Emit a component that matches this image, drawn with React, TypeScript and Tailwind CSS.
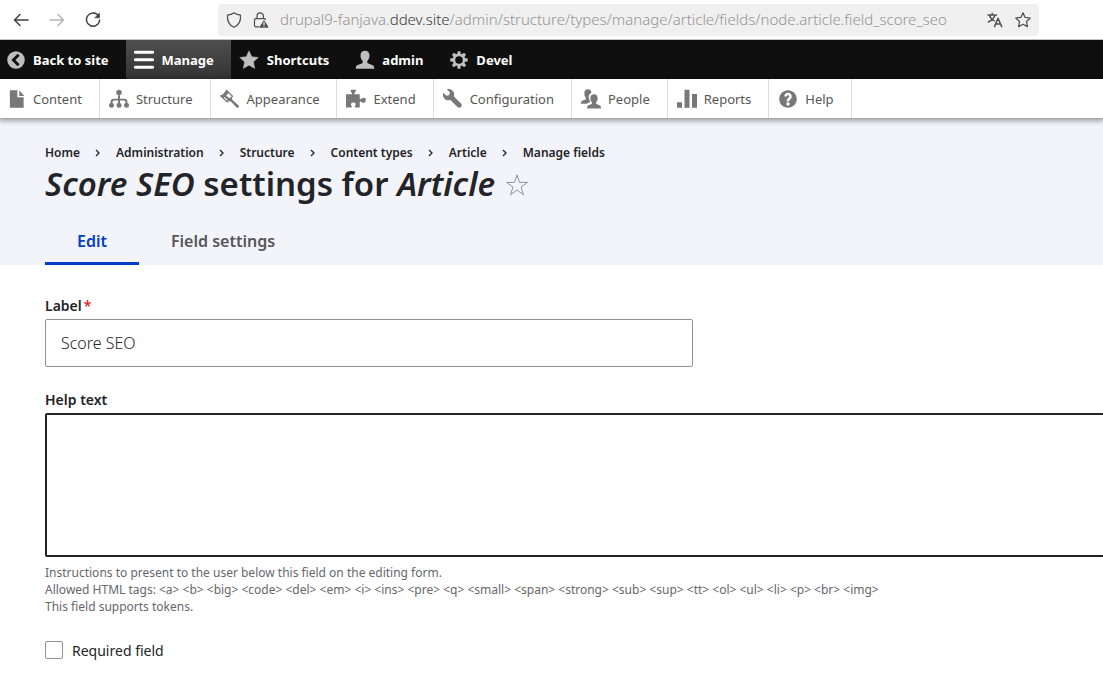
import type { ReactNode } from "react";

type IconProps = { children: ReactNode; className?: string };

function Glyph({ children, className = "size-5" }: IconProps) {
  return (
    <svg viewBox="0 0 16 16" fill="currentColor" aria-hidden="true" className={`shrink-0 ${className}`}>
      {children}
    </svg>
  );
}

function Line({ children, className = "size-4" }: IconProps) {
  return (
    <svg
      viewBox="0 0 16 16"
      fill="none"
      stroke="currentColor"
      strokeWidth="1.25"
      strokeLinecap="round"
      strokeLinejoin="round"
      aria-hidden="true"
      className={`shrink-0 ${className}`}
    >
      {children}
    </svg>
  );
}

const starPath =
  "M8 .6l2.200 4.700 5.200.7-3.900 3.500 1.100 5.200L8 12.100l-4.600 2.600 1.100-5.200L.6 6l5.200-.7z";

const tabs = [
  {
    label: "Back to site",
    icon: (
      <path
        fillRule="evenodd"
        d="M8 1a7 7 0 1 0 0 14A7 7 0 0 0 8 1zM10.900 11.400 9.300 13 4.300 8l5-5 1.600 1.600L7.500 8z"
      />
    ),
  },
  {
    label: "Manage",
    icon: <path d="M1.100.6h13.800a1.100 1.100 0 0 1 0 2.400H1.100a1.100 1.100 0 0 1 0-2.400zM1.100 6.600h13.800a1.100 1.100 0 0 1 0 2.400H1.100a1.100 1.100 0 0 1 0-2.400zM1.100 12.600h13.800a1.100 1.100 0 0 1 0 2.400H1.100a1.100 1.100 0 0 1 0-2.400z" />,
  },
  { label: "Shortcuts", icon: <path d={starPath} stroke="currentColor" strokeWidth=".4" strokeLinejoin="round" /> },
  {
    label: "admin",
    icon: (
      <path d="M8 .6c2.300 0 3.600 1.400 3.600 3.800 0 1.500-.5 3-1.500 4-.5.6-.5 1.700.2 2.200.9.7 2.700.9 3.900 1.500.8.400 1.200 1.300 1.200 2.900H.6c0-1.600.4-2.500 1.200-2.900 1.200-.6 3-.8 3.900-1.500.7-.5.7-1.600.2-2.200-1-1-1.500-2.500-1.500-4C4.400 2 5.700.6 8 .6z" />
    ),
  },
  {
    label: "Devel",
    icon: (
      <path
        fillRule="evenodd"
        d="M6.900 1h2.200l.3 2 .9.4 1.700-1.200 1.600 1.600-1.200 1.700.4.9 2.200.4v2.300l-2.200.3-.4.900 1.300 1.800-1.600 1.600-1.800-1.300-.9.4-.3 2.200H6.900l-.3-2.200-.9-.4-1.800 1.300-1.600-1.600 1.300-1.800-.4-.9L1 9.100V6.800l2.200-.4.4-.9-1.200-1.700L4 2.200l1.700 1.200.9-.4zM8 5a3 3 0 1 0 0 6 3 3 0 0 0 0-6z"
      />
    ),
  },
];

const menu = [
  {
    label: "Content",
    icon: <path d="M1.500 1h6v5.500h5V15h-11zM9 1l4 4.500H9z" />,
  },
  {
    label: "Structure",
    icon: (
      <>
        <path d="M7.200 5h1.600v7H7.200z" />
        <path d="M1.300 12.500V10q0-2.300 2.300-2.300h8.800q2.300 0 2.300 2.300v2.500h-1.500v-2q0-1.300-1.300-1.300H4.100q-1.300 0-1.300 1.300v2z" />
        <circle cx="8" cy="2.800" r="2.200" />
        <circle cx="2" cy="13" r="2" />
        <circle cx="8" cy="13" r="2" />
        <circle cx="14" cy="13" r="2" />
      </>
    ),
  },
  {
    label: "Appearance",
    icon: (
      <path
        fillRule="evenodd"
        d="M5.200.3 10.700 5.800 9.500 7.100l.5 1.700 4.700 4.200q.8.800.1 1.600-.9.800-1.700 0L8.700 10l-1.700-.2-1.300 1.200L-.4 5.200q1.800-.2 2.900-1.300T5.200.3zM6.700 3.400 4.900 5.200 7.200 7.200Q8 7.400 8.700 6.400l.7-.7zM3.600 6.300 3 6.900l2.600 2.500.6-.6z"
      />
    ),
  },
  {
    label: "Extend",
    icon: (
      <path d="M0 4.200h4.600c.5-.3.300-.8-.1-1.300L3.800 2V.5h4V2L7 2.900c-.4.500-.6 1-.1 1.300H11v3.600c.2.500.8.400 1.300 0 1.700-1.300 3.500-.9 3.500 1.200s-1.800 2.600-3.500 1.300c-.5-.4-1.100-.5-1.300 0v4.400H7.400c-.6-.1-.5-.7-.1-1.200.9-1.300.4-2.700-1.400-2.700s-2.400 1.400-1.500 2.700c.4.500.5 1.100-.1 1.200H0z" />
    ),
  },
  {
    label: "Configuration",
    icon: (
      <path d="M14.416 11.586l-.01-.008v-.001l-5.656-5.656c.15-.449.252-.921.252-1.421 0-2.485-2.016-4.500-4.502-4.500-.505 0-.981.102-1.434.255l2.431 2.431-.588 2.196-2.196.588-2.445-2.445c-.162.464-.268.956-.268 1.475 0 2.486 2.014 4.500 4.500 4.500.5 0 .972-.102 1.421-.251l5.667 5.665c.781.781 2.047.781 2.828 0s.781-2.047 0-2.828z" />
    ),
  },
  {
    label: "People",
    icon: (
      <>
        <path d="M5.600.2c1.700 0 2.700 1 2.700 2.800C6.500 4 6 5.500 6.300 7.400c.2 1 .6 1.700 1.100 2.300-.5 1.200-2 1.300-2.900 2H0c0-1.500.3-2 1.400-2.500.9-.4 2.200-.6 2.500-1.300.2-.5-.2-1-.5-1.600C2.800 5.400 2.700 4.600 2.700 3.400 2.700 1.400 3.700.2 5.600.2z" />
        <path d="M10.400 4.200c1.900 0 2.900 1.200 2.900 3.100 0 1.300-.3 2.200-1 3-.5.600-.4 1.400.1 1.700.8.500 2 .7 2.800 1.200.6.400.8 1 .8 2.300H4.900c0-1.300.2-1.900.8-2.300.8-.5 2-.7 2.700-1.200.5-.3.600-1.100.1-1.700-.7-.8-1-1.700-1-3 0-1.900 1-3.100 2.900-3.100z" />
      </>
    ),
  },
  {
    label: "Reports",
    icon: <path d="M0 10.500h4V15H0zM6 .5h4V15H6zM12 4h4v11h-4z" />,
  },
  {
    label: "Help",
    icon: (
      <path d="M8.002 1c-3.868 0-7.002 3.134-7.002 7s3.134 7 7.002 7c3.865 0 7-3.134 7-7s-3.135-7-7-7zm3 5c0 .551-.16 1.085-.477 1.586l-.158.22c-.07.093-.189.241-.361.393-.168.148-.35.299-.545.447l-.203.189-.141.129-.096.17-.021.235v.63h-2.001v-.704c.026-.396.078-.73.204-.999.125-.269.271-.498.439-.688l.225-.21-.01-.015.176-.14.137-.128c.186-.139.357-.277.516-.417l.148-.18c.098-.152.168-.323.168-.518 0-.552-.447-1-1.002-1-.553 0-1.002.448-1.002 1h-2.002c0-1.657 1.343-3 3.002-3 1.656 0 3 1.343 3 3zm-1.750 6.619c0 .344-.281.625-.625.625h-1.250c-.345 0-.626-.281-.626-.625v-1.238c0-.344.281-.625.626-.625h1.250c.344 0 .625.281.625.625v1.238z" />
    ),
  },
];

const crumbs = ["Home", "Administration", "Structure", "Content types", "Article", "Manage fields"];

function BrowserBar() {
  return (
    <div className="flex h-10 items-center border-b border-[#c4c4c4] bg-white pr-16 text-[#3f3f3f]">
      <div className="flex w-[218px] shrink-0 items-center gap-5 pl-[13px]">
        <button type="button" aria-label="Back">
          <Line><path d="M15 8H1.500M7 2.500 1.500 8 7 13.500" strokeWidth="1.500" /></Line>
        </button>
        <button type="button" aria-label="Forward" className="text-[#b4b4b4]" disabled>
          <Line><path d="M1 8h13.500M9 2.500 14.500 8 9 13.500" strokeWidth="1.500" /></Line>
        </button>
        <button type="button" aria-label="Reload">
          <Line>
            <path d="M13.700 4.300A6.600 6.600 0 1 0 14.600 8" strokeWidth="1.400" />
            <path d="M14.500 1.300v4.500H10z" fill="currentColor" strokeWidth=".6" />
          </Line>
        </button>
      </div>
      <div className="flex h-8 min-w-0 flex-1 items-center rounded bg-[#f0f0f0] pr-2 pl-2 text-[#505050]">
        <Line><path d="M8 .8c2 1.500 4 2.200 6.500 2.400C15 9 12.500 13.300 8 15.300 3.500 13.300 1 9 1.500 3.200 4 3 6 2.300 8 .8z" /></Line>
        <span className="ml-[11px] flex">
          <Line>
            <path d="M4 6.500V4a3.200 3.200 0 0 1 6.400 0v2.500M6 14.800H2.700A1.200 1.200 0 0 1 1.500 13.600V7.800q0-1.200 1.200-1.200h8.500q.9 0 1 .8" />
            <path d="m11 9 3.800 6H7.200z" fill="currentColor" />
            <path d="M11 10.600v2M11 14v.2" stroke="#f0f0f0" />
          </Line>
        </span>
        <div className="ml-[11px] min-w-0 flex-1 overflow-hidden font-['Noto_Sans',sans-serif] text-[15px] font-[350] whitespace-nowrap text-[#949494]">
          drupal9-fanjava.<span className="text-[#383838]">ddev.site</span>
          /admin/structure/types/manage/article/fields/node.article.field_score_seo
        </div>
        <button type="button" aria-label="Translate" className="ml-3">
          <Line>
            <path d="M1 3h8.500M5.200 1.200V3M2.300 3c.8 2.800 2.800 4.500 5 5.800M8 3C7 6.500 4.500 8.500 1.300 10" strokeWidth="1.400" />
            <path d="m7.500 14.600 3.500-8.400 3.700 8.400M8.800 12h4.600" strokeWidth="1.500" />
          </Line>
        </button>
        <button type="button" aria-label="Bookmark" className="ml-3">
          <Line><path d="m8 .8 2.100 4.600 5.100.6-3.700 3.500.9 5.100L8 12.200l-4.400 2.400.9-5.100L.8 6l5.100-.6z" /></Line>
        </button>
      </div>
    </div>
  );
}

export default function App() {
  return (
    <div className="min-h-screen overflow-x-hidden bg-white font-['Noto_Sans',sans-serif] text-[#232429]">
      <BrowserBar />
      <nav aria-label="Toolbar" className="flex h-[39px] bg-[#0f0f0f] text-[13px] font-bold text-white">
        {tabs.map((tab, i) => (
          <a
            key={tab.label}
            href="#"
            className={`flex items-center pr-[17px] ${i === 0 ? "gap-[7px] pl-[6px]" : i < 3 ? "gap-2 pl-2" : "gap-[7px] pl-[9px]"} ${
              i === 1 ? "bg-linear-to-b from-[#4f4f4f] to-[#333333]" : ""
            }`}
          >
            <Glyph className={i === 1 ? "size-5 text-white" : "size-5 text-[#bebebe]"}>{tab.icon}</Glyph>
            <span className="pt-0.5">{tab.label}</span>
          </a>
        ))}
      </nav>
      <nav
        aria-label="Administration menu"
        className="relative flex h-10 border-b border-[#aaaaaa] bg-white text-[13px] text-[#565656] shadow-[0_1px_5px_1px_rgba(0,0,0,0.35)]"
      >
        {menu.map((item, i) => (
          <a
            key={item.label}
            href="#"
            className={`flex items-center border-r border-[#dddddd] pr-[17px] ${i === 0 ? "gap-[5px] pl-2" : "gap-[7px] pl-[9px]"}`}
          >
            <Glyph className="size-5 text-[#787878]">{item.icon}</Glyph>
            <span className="pt-0.5">{item.label}</span>
          </a>
        ))}
      </nav>

      <header className="bg-[#f3f4f9] pt-6 pl-[45px]">
        <nav aria-label="Breadcrumb">
          <ol className="flex text-[12px] leading-5 font-semibold">
            {crumbs.map((crumb, i) => (
              <li key={crumb} className="flex items-center">
                {i > 0 && (
                  <svg viewBox="0 0 5 8" className="mr-4 ml-[15px] h-2 w-[5px]" fill="none" stroke="currentColor" strokeWidth="1.300" aria-hidden="true">
                    <path d="m1 1 3 3-3 3" />
                  </svg>
                )}
                <a href="#">{crumb}</a>
              </li>
            ))}
          </ol>
        </nav>
        <div className="flex items-center gap-[10px]">
          <h1 className="text-[33px] leading-[42px] font-semibold whitespace-nowrap">
            <em>Score SEO</em> settings for <em>Article</em>
          </h1>
          <button type="button" aria-label="Add to shortcuts" className="pt-0.5">
            <svg viewBox="0 0 24 24" className="size-6" fill="none" stroke="#8e929c" strokeWidth="1" aria-hidden="true">
              <path d="m12 1.800 2.500 7.600h8l-6.500 4.700 2.500 7.700-6.500-4.800-6.500 4.800L8 14.100 1.500 9.400h8z" />
            </svg>
          </button>
        </div>
        <nav aria-label="Tabs" className="mt-3 flex h-12 text-[16px] leading-6 font-semibold">
          <a href="#" className="border-b-3 border-[#003ecc] px-8 pt-3 text-[#003ecc]">Edit</a>
          <a href="#" className="px-8 pt-3 text-[#55565b]">Field settings</a>
        </nav>
      </header>

      <form className="pt-8 pl-[45px]" onSubmit={(e) => e.preventDefault()}>
        <label htmlFor="label" className="block text-[14px] leading-[18px] font-semibold">
          Label<span className="ml-0.5 text-[#dc2323]">*</span>
        </label>
        <input
          id="label"
          type="text"
          defaultValue="Score SEO"
          className="mt-1 block h-12 w-[648px] max-w-full rounded-xs border border-[#919297] bg-white px-[15px] text-[16px] font-[350]"
        />
        <label htmlFor="help" className="mt-6 block text-[14px] leading-[18px] font-semibold">
          Help text
        </label>
        <textarea
          id="help"
          className="mt-1 block h-36 w-[calc(100%+45px)] resize-none rounded-xs border-2 border-[#232429] bg-white p-4 outline-none"
        />
        <div className="mt-[7px] text-[12px] leading-[17px] text-[#66676c]">
          Instructions to present to the user below this field on the editing form.
          <br />
          Allowed HTML tags: &lt;a&gt; &lt;b&gt; &lt;big&gt; &lt;code&gt; &lt;del&gt; &lt;em&gt; &lt;i&gt; &lt;ins&gt; &lt;pre&gt; &lt;q&gt; &lt;small&gt; &lt;span&gt; &lt;strong&gt; &lt;sub&gt; &lt;sup&gt; &lt;tt&gt; &lt;ol&gt; &lt;ul&gt; &lt;li&gt; &lt;p&gt; &lt;br&gt; &lt;img&gt;
          <br />
          This field supports tokens.
        </div>
        <div className="mt-[25px] flex items-center gap-[9px] pb-4">
          <input
            id="required"
            type="checkbox"
            className="size-[18px] appearance-none rounded-xs border border-[#919297] bg-white checked:bg-[#003ecc]"
          />
          <label htmlFor="required" className="pt-0.5 text-[14px] leading-[18px]">Required field</label>
        </div>
      </form>
    </div>
  );
}
